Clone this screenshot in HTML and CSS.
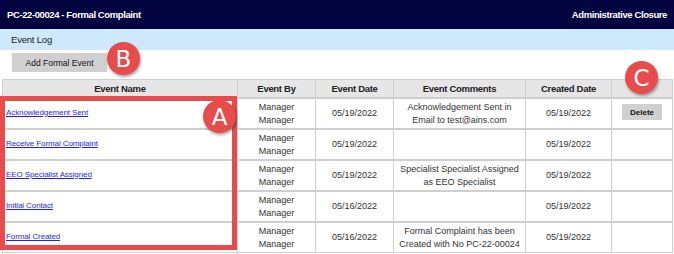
FILE: index.html
```html
<!DOCTYPE html>
<html lang="en">
<head>
<meta charset="UTF-8">
<title>Event Log</title>
<link rel="stylesheet" href="styles.css">
</head>
<body>

<div class="header-bar">
  <span>PC-22-00024 - Formal Complaint</span>
  <span>Administrative Closure</span>
</div>

<div class="section-bar">Event Log</div>

<div class="toolbar">
  <button class="btn">Add Formal Event</button>
</div>

<table class="events">
  <colgroup>
    <col style="width:235px">
    <col style="width:78px">
    <col style="width:78px">
    <col style="width:132px">
    <col style="width:86px">
    <col>
  </colgroup>
  <thead>
    <tr>
      <th>Event Name</th>
      <th>Event By</th>
      <th>Event Date</th>
      <th>Event Comments</th>
      <th>Created Date</th>
      <th></th>
    </tr>
  </thead>
  <tbody>
    <tr>
      <td class="name"><a href="#">Acknowledgement Sent</a></td>
      <td>Manager<br>Manager</td>
      <td>05/19/2022</td>
      <td>Acknowledgement Sent in<br>Email to test@ains.com</td>
      <td>05/19/2022</td>
      <td class="actions"><button class="btn small">Delete</button></td>
    </tr>
    <tr>
      <td class="name"><a href="#">Receive Formal Complaint</a></td>
      <td>Manager<br>Manager</td>
      <td>05/19/2022</td>
      <td></td>
      <td>05/19/2022</td>
      <td></td>
    </tr>
    <tr>
      <td class="name"><a href="#">EEO Specialist Assigned</a></td>
      <td>Manager<br>Manager</td>
      <td>05/19/2022</td>
      <td>Specialist Specialist Assigned<br>as EEO Specialist</td>
      <td>05/19/2022</td>
      <td></td>
    </tr>
    <tr>
      <td class="name"><a href="#">Initial Contact</a></td>
      <td>Manager<br>Manager</td>
      <td>05/16/2022</td>
      <td></td>
      <td>05/19/2022</td>
      <td></td>
    </tr>
    <tr>
      <td class="name"><a href="#">Formal Created</a></td>
      <td>Manager<br>Manager</td>
      <td>05/16/2022</td>
      <td>Formal Complaint has been<br>Created with No PC-22-00024</td>
      <td>05/19/2022</td>
      <td></td>
    </tr>
  </tbody>
</table>

<!-- callout annotations -->
<div class="callout-box"></div>
<div class="badge badge-a">A</div>
<div class="badge badge-b">B</div>
<div class="badge badge-c">C</div>

</body>
</html>
```

FILE: styles.css
```css
body {
  margin: 0;
  font-family: "Liberation Sans", Arial, sans-serif;
  font-size: 9px;
  color: #222;
  background: #fff;
  position: relative;
  width: 674px;
  height: 254px;
  overflow: hidden;
}

/* Top bar */
.header-bar {
  background: #03033f;
  color: #fff;
  font-weight: bold;
  font-size: 9.5px;
  letter-spacing: -0.4px;
  height: 29px;
  padding: 0 7px;
  display: flex;
  justify-content: space-between;
  align-items: center;
}

.section-bar {
  background: #cde9fb;
  height: 21px;
  padding-left: 11px;
  display: flex;
  align-items: center;
  font-size: 9.5px;
  letter-spacing: -0.2px;
}

.toolbar {
  height: 29px;
  padding: 3px 0 0 12px;
  box-sizing: border-box;
}

/* Buttons */
.btn {
  background: #d0d0d0;
  border: none;
  font-family: inherit;
  font-size: 8.5px;
  color: #111;
  width: 95px;
  height: 19px;
  padding: 0;
  cursor: pointer;
}

.btn.small {
  width: 40px;
  height: 16px;
  font-weight: bold;
  font-size: 8px;
}

/* Table */
.events {
  margin-left: 2px;
  width: 671px;
  border-collapse: collapse;
  table-layout: fixed;
}

.events th {
  background: #e6e6e6;
  font-size: 9.5px;
  letter-spacing: -0.3px;
  font-weight: bold;
  color: #222;
  height: 17px;
  padding: 0;
  border: 1px solid #cfcfcf;
}

.events td {
  border: 1px solid #cfcfcf;
  border-top: 2px solid #cfcfcf;
  height: 29px;
  padding: 0;
  text-align: center;
  white-space: nowrap;
  line-height: 13px;
  font-size: 9px;
  color: #333;
}

.events td.name {
  text-align: left;
  height: 26px;
  padding: 0 0 3px 3px;
}

.events td.actions {
  height: 26px;
  padding-bottom: 3px;
}

.events td.name a {
  color: #1f1fff;
  font-size: 8px;
  letter-spacing: -0.1px;
}

/* Callouts */
.callout-box {
  position: absolute;
  left: 0;
  top: 96px;
  width: 227px;
  height: 144px;
  border: 5px solid #e84b4b;
}

.badge {
  position: absolute;
  width: 33px;
  height: 33px;
  border-radius: 50%;
  background: #e84b4b;
  color: #fff;
  font-family: "DejaVu Sans", sans-serif;
  font-size: 23px;
  display: flex;
  align-items: center;
  justify-content: center;
  box-shadow: 1px 2px 3px rgba(0, 0, 0, 0.35);
}

.badge-a { left: 203px; top: 100px; }
.badge-b { left: 107px; top: 42px; }
.badge-c { left: 625px; top: 61px; }
```
